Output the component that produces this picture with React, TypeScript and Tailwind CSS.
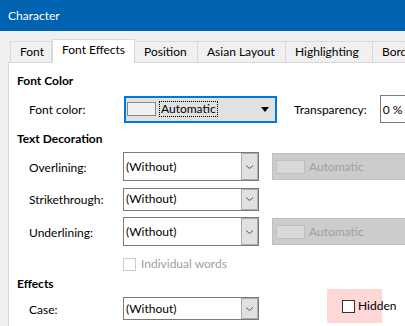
import React from "react";

const Chevron = () => (
  <svg width="9" height="6" viewBox="0 0 9 6" className="block">
    <path d="M1 1.5 L4.5 4.5 L8 1.5" fill="none" stroke="#555" strokeWidth="1" />
  </svg>
);

const Select = ({ h, value }: { h: string; value: string }) => (
  <div className={`flex ${h} w-[136px] shrink-0 border border-[#7a7a7a] bg-white`}>
    <div className="flex flex-1 items-center pl-[2px] text-black">{value}</div>
    <div className="flex w-[17px] items-center justify-center border border-[#adadad] bg-[#e1e1e1]">
      <Chevron />
    </div>
  </div>
);

const DisabledColor = () => (
  <div className="ml-[13px] flex h-[27px] w-[150px] shrink-0 items-center border border-[#bfbfbf] bg-[#cccccc] pl-[3px]">
    <div className="h-[14px] w-[29px] border border-[#bfbfbf] bg-[#d9d9d9]" />
    <span className="ml-[4px] text-[#a0a0a0]">Automatic</span>
  </div>
);

const Label = ({ children }: { children: React.ReactNode }) => (
  <div className="w-[106px] shrink-0 pl-3 pt-[2px]">{children}</div>
);

export default function App() {
  const tabs = [
    { t: "Font", w: "w-[42px]" },
    { t: "Font Effects", w: "w-[83px]", active: true },
    { t: "Position", w: "w-[64px]" },
    { t: "Asian Layout", w: "w-[89px]" },
    { t: "Highlighting", w: "w-[88px]" },
    { t: "Borders", w: "w-[80px]" },
  ];
  return (
    <div
      className="flex h-[326px] w-[405px] flex-col overflow-hidden bg-[#f0f0f0] text-[12px] leading-4 text-black"
      style={{ fontFamily: 'Lato, "Segoe UI", sans-serif' }}
    >
      <div className="flex h-[31px] shrink-0 items-center bg-[#0063b1] pl-2 text-[12px] text-white">
        Character
      </div>
      <div className="flex h-[31px] shrink-0 items-end pl-[10px]">
        {tabs.map((tab) =>
          tab.active ? (
            <div
              key={tab.t}
              className={`${tab.w} relative z-10 -mb-px flex h-[24px] shrink-0 items-center justify-center border-x border-t border-[#d9d9d9] bg-white pb-[3px]`}
            >
              {tab.t}
            </div>
          ) : (
            <div
              key={tab.t}
              className={`${tab.w} -ml-px flex h-[21px] shrink-0 items-center justify-start border-x border-t border-[#d9d9d9] bg-[#f0f0f0] pl-[9px] first:ml-0`}
            >
              <span className="whitespace-nowrap">{tab.t}</span>
            </div>
          )
        )}
      </div>
      <div className="ml-2 flex-1 border-l border-t border-[#d9d9d9] bg-white pl-2 pt-[10px]">
        <div className="h-4 font-bold">Font Color</div>

        <div className="mt-[6px] flex h-[28px] items-center">
          <Label>Font color:</Label>
          <div className="ml-px flex h-[27px] w-[153px] shrink-0 items-center border-2 border-[#0078d7] bg-[#e1e1e1] pl-[1px]">
            <div className="h-[14px] w-[29px] border border-[#888888] bg-[#f0f0f0]" />
            <div className="ml-[3px] border border-dotted border-black px-px leading-[14px]">Automatic</div>
            <div className="ml-auto mr-[6px] h-0 w-0 border-x-[4px] border-t-[5px] border-x-transparent border-t-black" />
          </div>
          <div className="ml-[17px] shrink-0 pt-[2px]">Transparency:</div>
          <div className="ml-[13px] flex h-[28px] w-[60px] shrink-0 items-center border border-[#7a7a7a] pl-[2px] pt-[1px]">0 %</div>
        </div>

        <div className="mt-[8px] h-4 font-bold">Text Decoration</div>

        <div className="mt-[5px] flex h-[29px] items-center">
          <Label>Overlining:</Label>
          <Select h="h-[29px]" value="(Without)" />
          <DisabledColor />
        </div>

        <div className="mt-[7px] flex h-[22px] items-center">
          <Label>Strikethrough:</Label>
          <Select h="h-[23px]" value="(Without)" />
        </div>

        <div className="mt-[7px] flex h-[29px] items-center">
          <Label>Underlining:</Label>
          <Select h="h-[29px]" value="(Without)" />
          <DisabledColor />
        </div>

        <div className="mt-[12px] flex h-[12px] items-center pl-[106px]">
          <div className="h-[13px] w-[13px] shrink-0 border border-[#cccccc] bg-white" />
          <span className="ml-[5px] text-[#a0a0a0]">Individual words</span>
        </div>

        <div className="mt-[6px] h-4 font-bold">Effects</div>

        <div className="mt-[5px] flex h-[23px] items-center">
          <Label>Case:</Label>
          <Select h="h-[23px]" value="(Without)" />
          <div className="mb-[5px] ml-[68px] flex h-[34px] w-[55px] shrink-0 items-center bg-[#ffd7d7] pl-[15px]">
            <div className="h-[13px] w-[13px] shrink-0 border border-[#333333] bg-white" />
            <span className="ml-[3px] whitespace-nowrap">Hidden</span>
          </div>
        </div>

        <div className="mt-[6px] flex">
          <div className="w-[106px] shrink-0" />
          <Select h="h-[23px]" value="" />
        </div>
      </div>
    </div>
  );
}
